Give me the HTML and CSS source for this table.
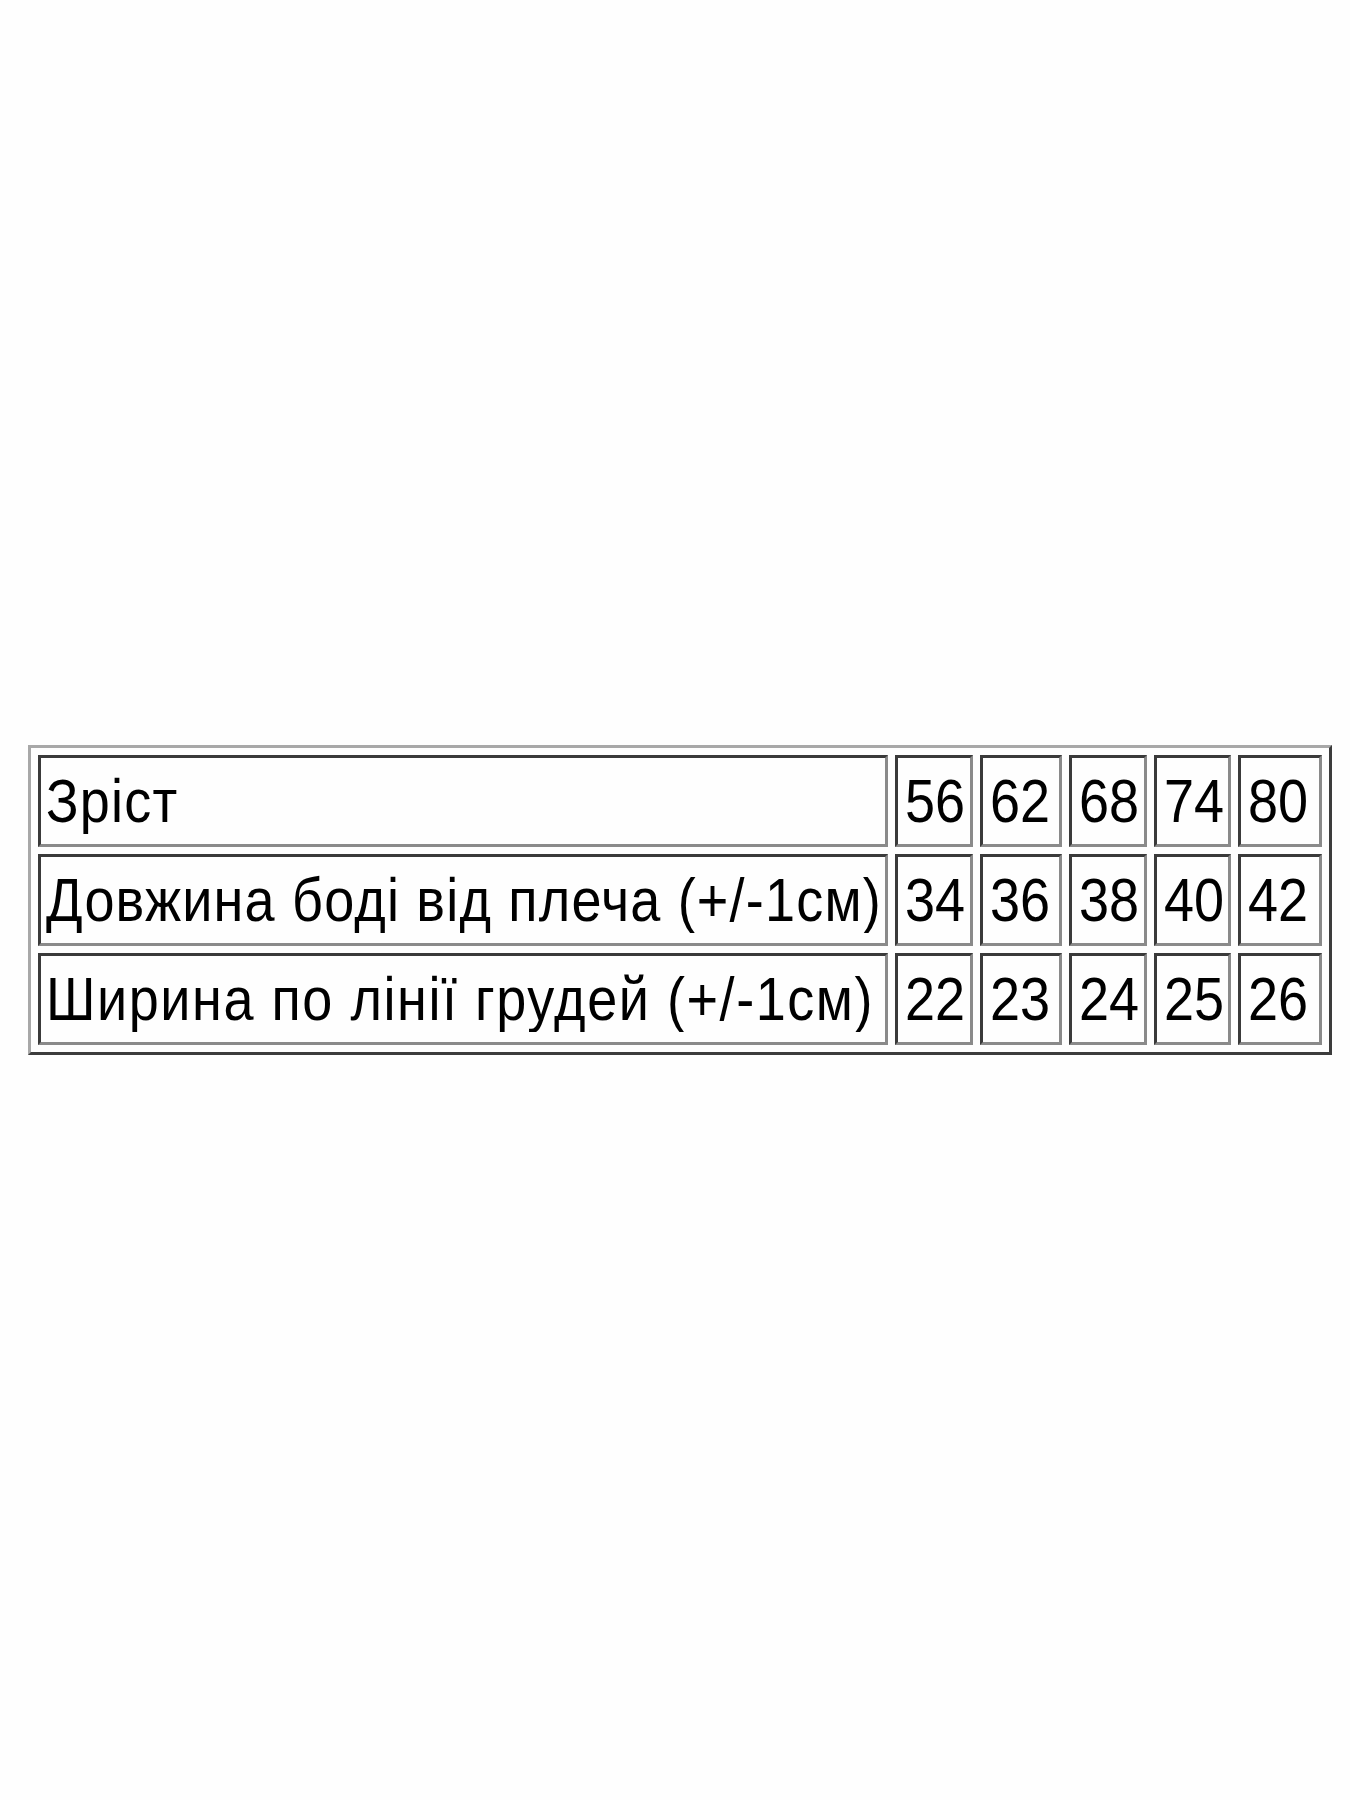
FILE: index.html
```html
<!DOCTYPE html>
<html lang="uk">
<head>
<meta charset="utf-8">
<title>Таблиця розмірів</title>
<link rel="stylesheet" href="styles.css">
</head>
<body>
<main class="page">
  <table class="sizes">
    <tr>
      <td class="label"><span class="txt">Зріст</span></td>
      <td class="num c1"><span class="txt">56</span></td>
      <td class="num c2"><span class="txt">62</span></td>
      <td class="num c3"><span class="txt">68</span></td>
      <td class="num c4"><span class="txt">74</span></td>
      <td class="num c5"><span class="txt">80</span></td>
    </tr>
    <tr>
      <td class="label"><span class="txt">Довжина боді від плеча (+/-1см)</span></td>
      <td class="num c1"><span class="txt">34</span></td>
      <td class="num c2"><span class="txt">36</span></td>
      <td class="num c3"><span class="txt">38</span></td>
      <td class="num c4"><span class="txt">40</span></td>
      <td class="num c5"><span class="txt">42</span></td>
    </tr>
    <tr>
      <td class="label label-wide"><span class="txt">Ширина по лінії грудей (+/-1см)</span></td>
      <td class="num c1"><span class="txt">22</span></td>
      <td class="num c2"><span class="txt">23</span></td>
      <td class="num c3"><span class="txt">24</span></td>
      <td class="num c4"><span class="txt">25</span></td>
      <td class="num c5"><span class="txt">26</span></td>
    </tr>
  </table>
</main>
</body>
</html>
```

FILE: styles.css
```css
html, body {
  margin: 0;
  padding: 0;
  background: #fefefe;
}

.page {
  padding: 745px 0 0 28px;
  min-height: 1800px;
  box-sizing: border-box;
}

.sizes {
  width: 1304px;
  table-layout: fixed;
  border-collapse: separate;
  border-spacing: 7px;
  border-style: solid;
  border-width: 3px;
  border-color: #a8a8a8 #3c3c3c #3c3c3c #a8a8a8;
  font-family: "Liberation Sans", Arial, sans-serif;
  font-size: 54px;
  color: #000;
}

.sizes td {
  height: 92px;
  box-sizing: border-box;
  border-style: solid;
  border-width: 3px;
  border-color: #3a3a3a #8a8a8a #8a8a8a #3a3a3a;
  padding: 0 4px 0 6px;
  white-space: nowrap;
  vertical-align: middle;
  line-height: 1;
}

.sizes .label {
  width: auto;
  padding-left: 5px;
  letter-spacing: 1.2px;
}

.sizes .label-wide {
  letter-spacing: 1.55px;
}

.sizes .num {
  padding: 0 0 0 7px;
}

.sizes .c1 { width: 78px; }
.sizes .c2 { width: 82px; }
.sizes .c3 { width: 78px; }
.sizes .c4 { width: 77px; }
.sizes .c5 { width: 84px; }

.txt {
  display: inline-block;
  transform: scaleY(1.12);
  transform-origin: 50% 60%;
}
```
